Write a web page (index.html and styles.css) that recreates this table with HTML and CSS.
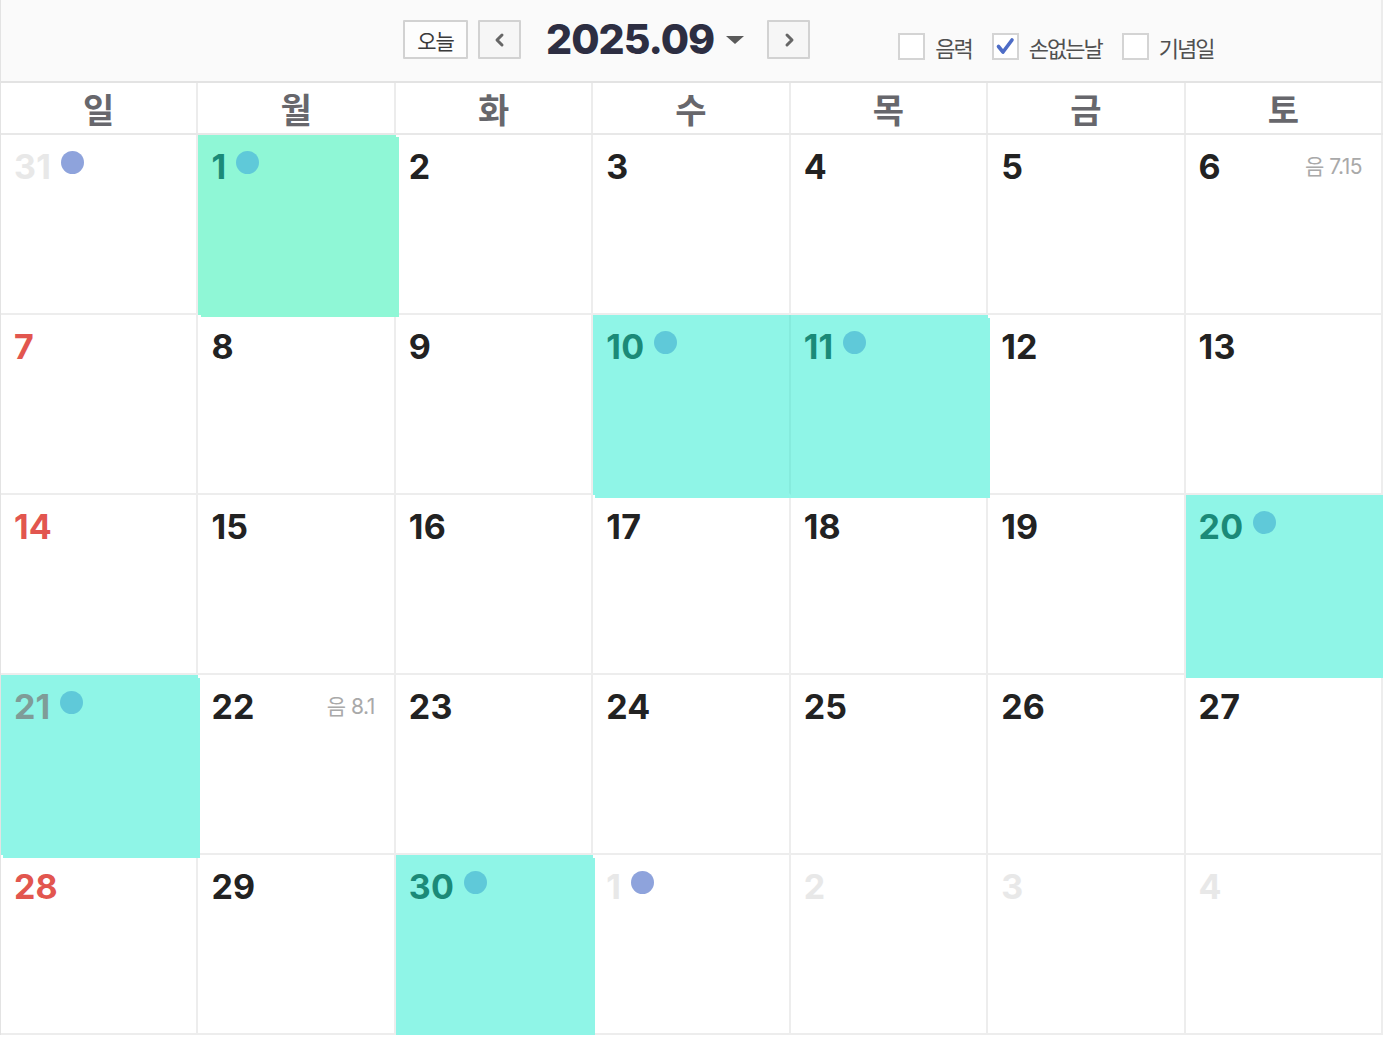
FILE: index.html
```html
<!DOCTYPE html>
<html lang="ko">
<head>
<meta charset="utf-8">
<title>2025.09</title>
<link rel="stylesheet" href="styles.css">
</head>
<body>
<div class="cal">
  <header class="top">
    <button class="btn today">오늘</button>
    <button class="btn arrow"><svg width="14" height="16" viewBox="0 0 14 16"><polyline points="9,3 4,8 9,13" fill="none" stroke="#666" stroke-width="3" stroke-linecap="round" stroke-linejoin="round"/></svg></button>
    <div class="title">2025.09</div>
    <span class="caret"></span>
    <button class="btn arrow next"><svg width="14" height="16" viewBox="0 0 14 16"><polyline points="5,3 10,8 5,13" fill="none" stroke="#666" stroke-width="3" stroke-linecap="round" stroke-linejoin="round"/></svg></button>
    <div class="opts">
      <label class="opt"><span class="box"></span>음력</label>
      <label class="opt"><span class="box"><svg width="21" height="21" viewBox="0 0 21 21"><polyline points="3.5,10.5 8,16 17,4" fill="none" stroke="#4d6cc6" stroke-width="3.6" stroke-linecap="round" stroke-linejoin="round"/></svg></span>손없는날</label>
      <label class="opt"><span class="box"></span>기념일</label>
    </div>
  </header>
  <div class="weekdays">
    <div class="wd">일</div><div class="wd">월</div><div class="wd">화</div><div class="wd">수</div><div class="wd">목</div><div class="wd">금</div><div class="wd">토</div>
  </div>
  <div class="days">
    <div class="day other"><span class="num">31</span><span class="dot blue"></span></div>
    <div class="day hl green"><span class="num">1</span><span class="dot"></span></div>
    <div class="day"><span class="num">2</span></div>
    <div class="day"><span class="num">3</span></div>
    <div class="day"><span class="num">4</span></div>
    <div class="day"><span class="num">5</span></div>
    <div class="day"><span class="num">6</span><span class="lunar">음 7.15</span></div>

    <div class="day sun"><span class="num">7</span></div>
    <div class="day"><span class="num">8</span></div>
    <div class="day"><span class="num">9</span></div>
    <div class="day hl join"><span class="num">10</span><span class="dot"></span></div>
    <div class="day hl"><span class="num">11</span><span class="dot"></span></div>
    <div class="day"><span class="num">12</span></div>
    <div class="day"><span class="num">13</span></div>

    <div class="day sun"><span class="num">14</span></div>
    <div class="day"><span class="num">15</span></div>
    <div class="day"><span class="num">16</span></div>
    <div class="day"><span class="num">17</span></div>
    <div class="day"><span class="num">18</span></div>
    <div class="day"><span class="num">19</span></div>
    <div class="day hl edge"><span class="num">20</span><span class="dot"></span></div>

    <div class="day sun hl"><span class="num">21</span><span class="dot"></span></div>
    <div class="day"><span class="num">22</span><span class="lunar">음 8.1</span></div>
    <div class="day"><span class="num">23</span></div>
    <div class="day"><span class="num">24</span></div>
    <div class="day"><span class="num">25</span></div>
    <div class="day"><span class="num">26</span></div>
    <div class="day"><span class="num">27</span></div>

    <div class="day sun"><span class="num">28</span></div>
    <div class="day"><span class="num">29</span></div>
    <div class="day hl"><span class="num">30</span><span class="dot"></span></div>
    <div class="day other"><span class="num">1</span><span class="dot blue"></span></div>
    <div class="day other"><span class="num">2</span></div>
    <div class="day other"><span class="num">3</span></div>
    <div class="day other"><span class="num">4</span></div>
  </div>
</div>
</body>
</html>
```

FILE: styles.css
```css
* { box-sizing: border-box; }
html, body { margin: 0; padding: 0; background: #fff; }
body { font-family: Inter, "Noto Sans CJK KR", sans-serif; }

.cal {
  width: 1383px;
  border-left: 1px solid #e3e3e3;
}

.top {
  height: 83px;
  background: #fafafa;
  border-bottom: 2px solid #e3e3e3;
  border-right: 2px solid #ececec;
  display: flex;
  align-items: flex-start;
  padding-left: 402px;
  padding-top: 20px;
}

.btn {
  height: 39px;
  border: 2px solid #d2d2d2;
  background: #fdfdfd;
  margin: 0;
  padding: 0;
  display: flex;
  align-items: center;
  justify-content: center;
  font-family: "Noto Sans CJK KR", sans-serif;
  border-radius: 1px;
}
.today {
  width: 65px;
  font-size: 21px;
  color: #3a3a3a;
  letter-spacing: -1px;
}
.arrow {
  width: 43px;
  margin-left: 10px;
  background: #f6f6f6;
}
.arrow.next { margin-left: 23px; }

.title {
  margin-left: 25px;
  font-family: Inter, sans-serif;
  font-weight: 800;
  font-size: 41px;
  line-height: 39px;
  color: #2d2e42;
  letter-spacing: -1px;
}
.caret {
  margin-left: 12px;
  margin-top: 16px;
  width: 0;
  height: 0;
  border-left: 9px solid transparent;
  border-right: 9px solid transparent;
  border-top: 8px solid #5a5a5a;
}

.opts {
  display: flex;
  margin-left: 88px;
  margin-top: 13px;
}
.opt {
  display: flex;
  align-items: center;
  font-family: "Noto Sans CJK KR", sans-serif;
  font-size: 22px;
  letter-spacing: -2px;
  color: #505050;
  margin-right: 20px;
  height: 27px;
}
.box {
  width: 27px;
  height: 27px;
  border: 2px solid #d4d4d4;
  background: #fff;
  margin-right: 10px;
  display: flex;
  align-items: center;
  justify-content: center;
}

.weekdays {
  display: grid;
  grid-template-columns: repeat(7, 1fr);
  height: 52px;
  border-bottom: 2px solid #e8e8e8;
}
.wd {
  border-right: 2px solid #ececec;
  display: flex;
  align-items: center;
  justify-content: center;
  font-family: "Noto Sans CJK KR", sans-serif;
  font-weight: 700;
  font-size: 34px;
  color: #67676c;
}

.days {
  display: grid;
  grid-template-columns: repeat(7, 1fr);
  grid-auto-rows: 180px;
}
.day {
  border-right: 2px solid #ededed;
  border-bottom: 2px solid #ededed;
  display: flex;
  align-items: flex-start;
  padding: 12px 19px 0 13px;
  background: #fff;
}

.num {
  font-weight: 700;
  font-size: 34px;
  line-height: 40px;
  color: #222;
  letter-spacing: 0.2px;
}
.sun .num { color: #e2564f; }
.other .num { color: #e8e8e8; }

.dot {
  width: 23px;
  height: 23px;
  border-radius: 50%;
  background: #5fc9d9;
  margin-left: 10px;
  margin-top: 4px;
}
.dot.blue { background: #8ea3dc; }

.lunar {
  margin-left: auto;
  margin-top: 8px;
  font-size: 21px;
  line-height: 24px;
  color: #a9a9a9;
  letter-spacing: -0.5px;
}

.hl {
  background: #8ff5e7;
  border-color: #8ff5e7;
  position: relative;
  z-index: 1;
  box-shadow: 2px 3px 0 #8ff5e7;
}
.hl.edge { box-shadow: 0 3px 0 #8ff5e7; }
.hl.green {
  background: #8ff7d6;
  border-color: #8ff7d6;
  box-shadow: 3px 2px 0 #8ff7d6;
}
.hl.join { border-right-color: #86ebdd; }
.hl .num { color: #1b8a78; }
.sun.hl .num { color: #7f9c98; }
```
